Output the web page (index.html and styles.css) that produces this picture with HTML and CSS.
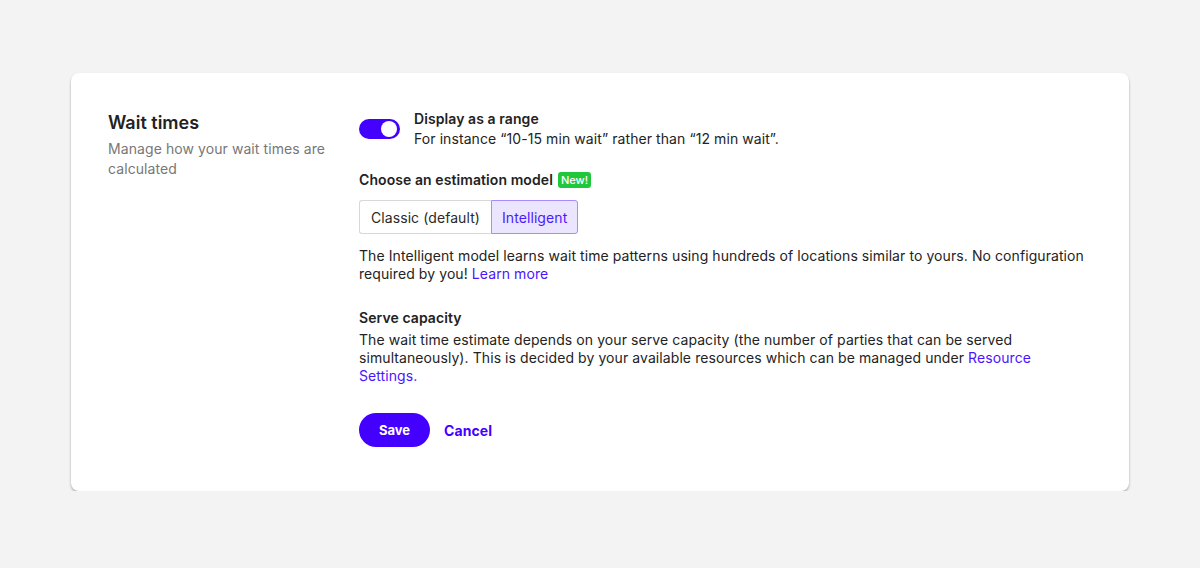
FILE: index.html
```html
<!DOCTYPE html>
<html lang="en">
<head>
<meta charset="utf-8">
<title>Wait times</title>
<link rel="stylesheet" href="styles.css">
</head>
<body>
<main class="page">
  <section class="card">
    <div class="intro">
      <h2 class="title">Wait times</h2>
      <p class="subtitle">Manage how your wait times are calculated</p>
    </div>
    <div class="settings">
      <div class="toggle-row">
        <span class="toggle" role="switch" aria-checked="true"><span class="knob"></span></span>
        <div class="toggle-text">
          <div class="label">Display as a range</div>
          <div class="hint">For instance “10-15 min wait” rather than “12 min wait”.</div>
        </div>
      </div>

      <div class="label model-label">Choose an estimation model <span class="badge">New!</span></div>
      <div class="segments">
        <button class="segment">Classic (default)</button>
        <button class="segment active">Intelligent</button>
      </div>
      <p class="text model-text">The Intelligent model learns wait time patterns using hundreds of locations similar to yours. No configuration required by you! <a href="#" class="link">Learn more</a></p>

      <div class="label capacity-label">Serve capacity</div>
      <p class="text capacity-text">The wait time estimate depends on your serve capacity (the number of parties that can be served simultaneously). This is decided by your available resources which can be managed under <a href="#" class="link">Resource Settings.</a></p>

      <div class="actions">
        <button class="btn-save">Save</button>
        <a href="#" class="btn-cancel">Cancel</a>
      </div>
    </div>
  </section>
</main>
</body>
</html>
```
FILE: styles.css
```css
* { box-sizing: border-box; }
html, body { margin: 0; padding: 0; }
body {
  background: #f3f3f3;
  font-family: "Inter", "Noto Sans", sans-serif;
  color: #232323;
  font-size: 14px;
  letter-spacing: 0.08px;
}
.page {
  padding: 73px 71px 0 71px;
}
.card {
  background: #fff;
  border-radius: 8px;
  box-shadow: 0 1px 2px rgba(0,0,0,0.12), 0 2px 3px rgba(0,0,0,0.2);
  padding: 36px 37px 44px 37px;
  display: grid;
  grid-template-columns: 251px 1fr;
  min-height: 418px;
}
.title {
  margin: 2px 0 0 0;
  font-size: 18px;
  line-height: 24px;
  font-weight: 600;
  color: #222;
  letter-spacing: 0;
}
.subtitle {
  margin: 4px 0 0 0;
  font-size: 14px;
  line-height: 20px;
  color: #777;
  width: 230px;
}
.settings { display: flex; flex-direction: column; align-items: flex-start; }
.toggle-row { display: flex; align-items: center; gap: 14px; }
.toggle {
  width: 41px; height: 20px;
  border-radius: 10px;
  background: #4400ff;
  position: relative;
  flex: none;
}
.knob {
  position: absolute;
  top: 2px; right: 3px;
  width: 16px; height: 16px;
  border-radius: 50%;
  background: #fff;
}
.label {
  font-weight: 600;
  line-height: 20px;
  color: #222;
}
.hint { line-height: 20px; color: #232323; }
.model-label { margin-top: 21px; display: flex; align-items: center; gap: 5px; }
.badge {
  background: #1fc73d;
  color: #fff;
  font-size: 11px;
  font-weight: 500;
  line-height: 16px;
  padding: 0 3px;
  border-radius: 3px;
  letter-spacing: 0;
}
.segments { display: flex; margin-top: 10px; }
.segment {
  font-family: inherit;
  font-size: 14px;
  letter-spacing: 0.08px;
  height: 34px;
  padding: 0 10px;
  background: #fff;
  color: #2a2a2a;
  border: 1px solid #d8d8d8;
  margin: 0;
  cursor: pointer;
}
.segment:first-child { border-radius: 3px 0 0 3px; border-right: none; width: 132px; }
.segment.active {
  background: #ebe5ff;
  border-color: #a68cff;
  color: #4a1aff;
  border-radius: 0 3px 3px 0;
  width: 87px;
}
.text { margin: 0; line-height: 18px; color: #232323; max-width: 728px; }
.model-text { margin-top: 13px; }
.link { color: #4b14ff; text-decoration: none; }
.capacity-label { margin-top: 25px; }
.capacity-text { margin-top: 3px; }
.actions { display: flex; align-items: center; gap: 14px; margin-top: 28px; }
.btn-save {
  font-family: inherit;
  background: #4400ff;
  color: #fff;
  border: none;
  height: 34px;
  width: 71px;
  border-radius: 17px;
  font-size: 13px;
  font-weight: 700;
  cursor: pointer;
}
.btn-cancel {
  color: #4400ff;
  font-weight: 700;
  font-size: 14px;
  text-decoration: none;
}
```
